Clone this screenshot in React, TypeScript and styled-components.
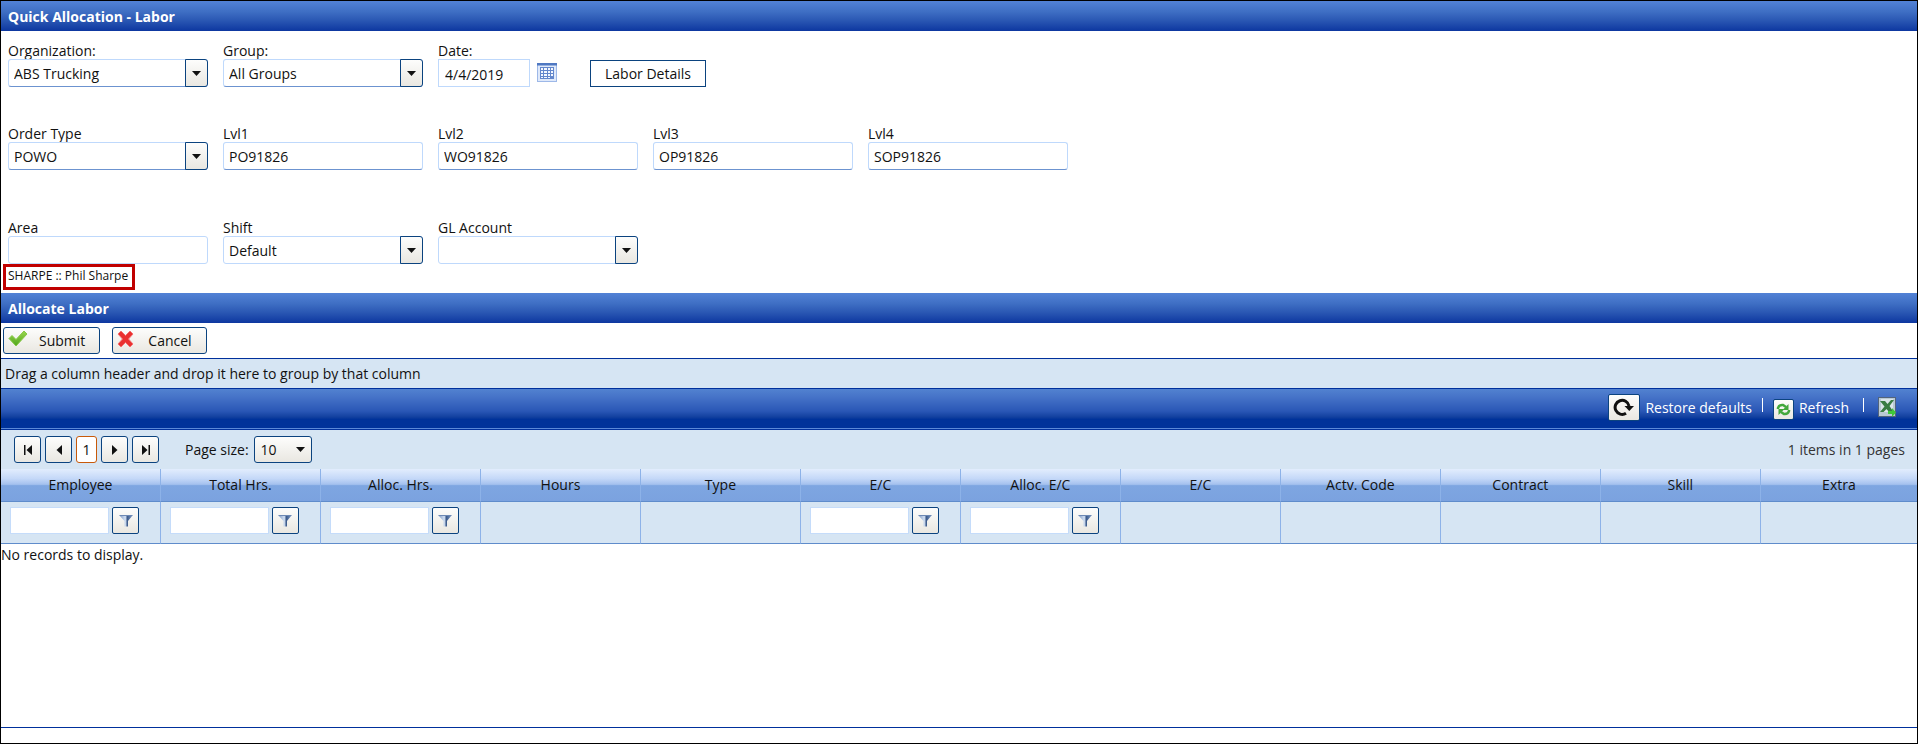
import React, { useId } from "react";
import styled, { createGlobalStyle } from "styled-components";

const GlobalStyle = createGlobalStyle`
  * { box-sizing: border-box; }
  body { margin: 0; background: #fff; }
  body, button, input, select { font-family: "Open Sans", "Noto Sans", sans-serif; font-size: 14px; color: #111; }
`;

const buttonFace = "linear-gradient(#fdfdfc, #e9e7e1)";

const Page = styled.div`
  min-height: 100vh;
  display: flex;
  flex-direction: column;
  border: 1px solid #000;
  background: #fff;
`;

const TitleBar = styled.h2`
  margin: 0;
  height: 30px;
  padding: 0 7px;
  display: flex;
  align-items: center;
  font-size: 14px;
  font-weight: 700;
  color: #fff;
  background: linear-gradient(#5282d6, #3f6fc4 35%, #2a57b3 65%, #0d37a0);
`;

const Form = styled.form`
  padding: 10px 7px 0;
  display: flex;
  flex-direction: column;
`;

const FormRow = styled.div<{ $space?: number }>`
  display: flex;
  align-items: flex-end;
  gap: 15px;
  margin-bottom: ${(p) => p.$space ?? 0}px;
`;

const Field = styled.div<{ $fit?: boolean }>`
  width: ${(p) => (p.$fit ? "auto" : "200px")};
  display: flex;
  flex-direction: column;
`;

const Label = styled.label`
  padding-top: 2px;
  line-height: 16px;
`;

const TextInput = styled.input<{ $light?: boolean }>`
  width: 100%;
  height: 28px;
  padding: 0 5px;
  border: 1px solid #bfd9fc;
  border-bottom-color: ${(p) => (p.$light ? "#bfd9fc" : "#6c93d0")};
  border-radius: 3px;
  background: #fff;
`;

const ComboBox = styled.div`
  display: grid;
  grid-template-columns: 1fr 23px;
`;

const ComboSelect = styled.select<{ $light?: boolean }>`
  grid-area: 1 / 1 / 2 / 3;
  height: 28px;
  padding: 0 28px 0 5px;
  appearance: none;
  border: 1px solid #bfd9fc;
  border-bottom-color: ${(p) => (p.$light ? "#bfd9fc" : "#6c93d0")};
  border-radius: 3px;
  background: #fff;
`;

const ComboArrow = styled.span`
  grid-area: 1 / 2;
  display: flex;
  align-items: center;
  justify-content: center;
  pointer-events: none;
  border: 1px solid #0b437f;
  border-radius: 0 3px 3px 0;
  background: ${buttonFace};
`;

const DateGroup = styled.div`
  display: flex;
  align-items: center;
  gap: 7px;
`;

const DateInput = styled.input`
  width: 92px;
  height: 28px;
  padding: 2px 6px 0;
  border: 1px solid #bfd9fc;
  background: #fff;
`;

const IconButton = styled.button`
  display: flex;
  padding: 0;
  border: 0;
  background: none;
`;

const OutlineButton = styled.button`
  height: 27px;
  margin-left: 18px;
  padding: 0 14px;
  border: 1px solid #0b437f;
  background: #fff;
`;

const EmployeeTag = styled.div`
  align-self: flex-start;
  margin: 0 0 3px -5px;
  height: 26px;
  padding: 0 4px 4px 2px;
  display: flex;
  align-items: center;
  border: 3px solid #c00000;
  font-size: 12px;
`;

const ActionBar = styled.div`
  height: 35px;
  padding: 4px 2px;
  display: flex;
  gap: 12px;
`;

const ActionButton = styled.button`
  height: 27px;
  padding: 0 14px 0 4px;
  display: flex;
  align-items: center;
  gap: 11px;
  border: 1px solid #0b437f;
  border-radius: 3px;
  background: ${buttonFace};

  svg {
    align-self: flex-start;
    margin-top: 2px;
  }
`;

const GroupPanel = styled.div`
  height: 30px;
  padding: 0 4px;
  display: flex;
  align-items: center;
  border-top: 1px solid #00309c;
  background: #d6e5f3;
`;

const CommandBar = styled.div`
  height: 42px;
  padding: 0 21px 4px;
  display: flex;
  align-items: center;
  justify-content: flex-end;
  color: #fff;
  border-top: 1px solid #00309c;
  border-bottom: 1px solid #00309c;
  background: linear-gradient(#5282d0, #4673c8 20%, #2a57b6 55%, #12409f 70%, #00329a 76%, #00329a 97%, #5a88d8 97%);
`;

const Command = styled.button`
  padding: 0;
  display: flex;
  align-items: center;
  gap: 5px;
  border: 0;
  background: none;
  color: #fff;
`;

const CommandIcon = styled.span<{ $small?: boolean }>`
  width: ${(p) => (p.$small ? 21 : 32)}px;
  height: ${(p) => (p.$small ? 21 : 27)}px;
  margin-top: ${(p) => (p.$small ? 4 : 0)}px;
  display: flex;
  align-items: center;
  justify-content: center;
  border: 1px solid #0b437f;
  border-radius: 2px;
  background: ${buttonFace};
`;

const Divider = styled.span<{ $wide?: boolean }>`
  width: 1px;
  height: 14px;
  margin: 0 ${(p) => (p.$wide ? 14 : 10)}px 4px;
  background: #fff;
`;

const Pager = styled.div`
  height: 39px;
  padding: 0 12px 0 13px;
  display: flex;
  align-items: center;
  gap: 4px;
  background: #d6e5f3;
`;

const PagerButton = styled.button<{ $current?: boolean }>`
  width: ${(p) => (p.$current ? 21 : 27)}px;
  height: 27px;
  padding: 0;
  display: flex;
  align-items: center;
  justify-content: center;
  border: 1px solid ${(p) => (p.$current ? "#c85a0a" : "#0b437f")};
  border-radius: 3px;
  background: ${(p) => (p.$current ? "#fff" : buttonFace)};
`;

const PageSizeLabel = styled.label`
  margin-left: 22px;
`;

const PageSize = styled.div`
  width: 58px;
  margin-left: 1px;
  display: grid;
  grid-template-columns: 1fr 16px;
  align-items: center;

  select {
    grid-area: 1 / 1 / 2 / 3;
    height: 27px;
    padding: 0 6px;
    appearance: none;
    border: 1px solid #0b437f;
    border-radius: 3px;
    background: ${buttonFace};
  }

  svg {
    grid-area: 1 / 2;
    pointer-events: none;
  }
`;

const PagerInfo = styled.span`
  margin-left: auto;
  color: #333;
`;

const Grid = styled.table`
  width: 100%;
  table-layout: fixed;
  border-collapse: separate;
  border-spacing: 0;
`;

const HeaderCell = styled.th`
  height: 33px;
  padding: 0 0 2px;
  font-weight: 400;
  text-align: center;
  border-bottom: 1px solid #5f8ccb;
  background: linear-gradient(#e2edfd, #c4d8f8 30%, #a4c1ee 48%, #7ea6e1 52%, #7ba2df);

  &:not(:last-child) {
    width: 8.35%;
    border-right: 1px solid #8db2e8;
  }
`;

const FilterCell = styled.td`
  height: 42px;
  padding: 0 0 5px 9px;
  border-bottom: 1px solid #5f8ccb;
  background: #d6e5f3;

  &:not(:last-child) {
    border-right: 1px solid #8db2e8;
  }
`;

const FilterBox = styled.div`
  display: flex;
  gap: 3px;
`;

const FilterInput = styled.input`
  width: 99px;
  height: 27px;
  padding: 0 5px;
  border: 1px solid #c5dcfa;
  background: #fff;
`;

const FilterButton = styled.button`
  width: 27px;
  height: 27px;
  padding: 0;
  display: flex;
  align-items: center;
  justify-content: center;
  border: 1px solid #0b437f;
  border-radius: 2px;
  background: ${buttonFace};
`;

const EmptyCell = styled.td`
  padding: 1px 0;
  line-height: 20px;
`;

const GridArea = styled.div`
  flex: 1;
  border-bottom: 1px solid #00309c;
`;

const Footer = styled.footer`
  height: 15px;
`;

const DownArrow = () => (
  <svg width="9" height="5" viewBox="0 0 9 5" aria-hidden="true">
    <path d="M0 0h9L4.500 5z" fill="#111" />
  </svg>
);

const CalendarIcon = () => (
  <svg width="20" height="20" viewBox="0 0 20 20" aria-hidden="true">
    <rect x="0.500" y="0.500" width="19" height="18" fill="#dfe9fa" stroke="#9db8e8" />
    <rect x="0" y="0" width="20" height="2.500" fill="#4f78c2" />
    <rect x="3" y="4" width="14" height="12" fill="#6387cc" />
    <path
      fill="#f4f8ff"
      d="M4 5h2v2h-2zM7 5h3v2h-3zM11 5h2v2h-2zM14 5h2v2h-2zM4 8h2v2h-2zM7 8h3v2h-3zM11 8h2v2h-2zM14 8h2v2h-2zM4 11h2v2h-2zM7 11h3v2h-3zM11 11h2v2h-2zM14 11h2v2h-2zM4 14h2v1h-2zM7 14h3v1h-3zM11 14h2v1h-2z"
    />
  </svg>
);

const CheckIcon = () => (
  <svg width="20" height="18" viewBox="0 0 20 18" aria-hidden="true">
    <defs>
      <linearGradient id="check" x1="0" y1="0" x2="0" y2="1">
        <stop offset="0" stopColor="#9ad64e" />
        <stop offset="1" stopColor="#4fa51c" />
      </linearGradient>
    </defs>
    <path d="M1 8.500l3-3 4 4L16 1l3 3L8 16z" fill="url(#check)" stroke="#86c845" strokeLinejoin="round" />
  </svg>
);

const CrossIcon = () => (
  <svg width="20" height="18" viewBox="0 0 20 18" aria-hidden="true">
    <path
      d="M1 4l3-3 4.500 4.500L13 1l3 3-4.500 5 4.500 5-3 3-4.500-4.500L4 17l-3-3 4.500-5z"
      fill="#ea3030"
      stroke="#f27070"
      strokeLinejoin="round"
    />
  </svg>
);

const FunnelIcon = () => (
  <svg width="14" height="13" viewBox="0 0 14 13" aria-hidden="true">
    <defs>
      <linearGradient id="funnel" x1="0" x2="1">
        <stop offset="0" stopColor="#7b98c6" />
        <stop offset="0.450" stopColor="#d3e1f4" />
        <stop offset="0.600" stopColor="#3c5a8a" />
        <stop offset="1" stopColor="#7d9ac8" />
      </linearGradient>
    </defs>
    <path d="M0.500 1.500h13L9 7v5.500H5.500V7z" fill="url(#funnel)" />
    <path d="M0.500 1.500h13" stroke="#6d89b5" />
  </svg>
);

const RestoreIcon = () => (
  <svg width="22" height="20" viewBox="0 0 22 20" aria-hidden="true">
    <path d="M13 16.200A7 7 0 1 1 16 9" fill="none" stroke="#111" strokeWidth="3" />
    <path d="M11.500 9H21l-4.700 5z" fill="#111" />
  </svg>
);

const RefreshIcon = () => (
  <svg width="15" height="15" viewBox="0 0 15 15" aria-hidden="true">
    <g fill="none" stroke="#43a83c" strokeWidth="2.500">
      <path d="M2 7V6q1-3.500 5-3l3 2" />
      <path d="M13 8v1q-1 3.500-5 3l-3-2" />
    </g>
    <path d="M12.500 2v6H6.500zM2.500 13V7h6z" fill="#43a83c" />
  </svg>
);

const ExcelIcon = () => (
  <svg width="18" height="20" viewBox="0 0 18 20" aria-hidden="true">
    <rect x="0.500" y="0.500" width="17" height="19" fill="#b9c9d4" stroke="#52647c" />
    <path d="M3 2h12v13H3z" fill="#dbe6ea" />
    <path d="M2 4h5l2.500 3L13 3h3l-4.500 6 4 6h-4.500l-2.500-3-3 3H2l4.500-5.500z" fill="#3a7d44" />
    <path d="M10 14h4v-3l4 4.500-4 4.500v-3h-4z" fill="#3fc83a" />
  </svg>
);

const FirstIcon = () => (
  <svg width="10" height="10" viewBox="0 0 10 10" aria-hidden="true">
    <path d="M1 0h1.500v10H1zM9 0v10L3.500 5z" fill="#111" />
  </svg>
);

const PrevIcon = () => (
  <svg width="10" height="10" viewBox="0 0 10 10" aria-hidden="true">
    <path d="M8 0v10L2.500 5z" fill="#111" />
  </svg>
);

const NextIcon = () => (
  <svg width="10" height="10" viewBox="0 0 10 10" aria-hidden="true">
    <path d="M2 0v10l5.500-5z" fill="#111" />
  </svg>
);

const LastIcon = () => (
  <svg width="10" height="10" viewBox="0 0 10 10" aria-hidden="true">
    <path d="M7.500 0H9v10H7.500zM1 0v10l5.500-5z" fill="#111" />
  </svg>
);

type FieldProps = { label: string; value: string; light?: boolean };

function TextField({ label, value, light }: FieldProps) {
  const id = useId();
  return (
    <Field>
      <Label htmlFor={id}>{label}</Label>
      <TextInput id={id} defaultValue={value} $light={light} />
    </Field>
  );
}

function ComboField({ label, value, light }: FieldProps) {
  const id = useId();
  return (
    <Field>
      <Label htmlFor={id}>{label}</Label>
      <ComboBox>
        <ComboSelect id={id} defaultValue={value} $light={light}>
          <option value={value}>{value}</option>
        </ComboSelect>
        <ComboArrow>
          <DownArrow />
        </ComboArrow>
      </ComboBox>
    </Field>
  );
}

const columns = [
  { title: "Employee", filter: true },
  { title: "Total Hrs.", filter: true },
  { title: "Alloc. Hrs.", filter: true },
  { title: "Hours" },
  { title: "Type" },
  { title: "E/C", filter: true },
  { title: "Alloc. E/C", filter: true },
  { title: "E/C" },
  { title: "Actv. Code" },
  { title: "Contract" },
  { title: "Skill" },
  { title: "Extra" },
];

export default function App() {
  return (
    <Page>
      <GlobalStyle />
      <TitleBar>Quick Allocation - Labor</TitleBar>
      <Form onSubmit={(e) => e.preventDefault()}>
        <FormRow $space={37}>
          <ComboField label="Organization:" value="ABS Trucking" />
          <ComboField label="Group:" value="All Groups" />
          <Field $fit>
            <Label htmlFor="date">Date:</Label>
            <DateGroup>
              <DateInput id="date" defaultValue="4/4/2019" />
              <IconButton type="button" aria-label="Open calendar">
                <CalendarIcon />
              </IconButton>
            </DateGroup>
          </Field>
          <OutlineButton type="button">Labor Details</OutlineButton>
        </FormRow>
        <FormRow $space={48}>
          <ComboField label="Order Type" value="POWO" />
          <TextField label="Lvl1" value="PO91826" />
          <TextField label="Lvl2" value="WO91826" />
          <TextField label="Lvl3" value="OP91826" />
          <TextField label="Lvl4" value="SOP91826" />
        </FormRow>
        <FormRow>
          <TextField label="Area" value="" light />
          <ComboField label="Shift" value="Default" light />
          <ComboField label="GL Account" value="" light />
        </FormRow>
        <EmployeeTag>SHARPE :: Phil Sharpe</EmployeeTag>
      </Form>

      <TitleBar>Allocate Labor</TitleBar>
      <ActionBar>
        <ActionButton type="button">
          <CheckIcon />
          Submit
        </ActionButton>
        <ActionButton type="button">
          <CrossIcon />
          Cancel
        </ActionButton>
      </ActionBar>
      <GroupPanel>Drag a column header and drop it here to group by that column</GroupPanel>
      <CommandBar>
        <Command type="button">
          <CommandIcon>
            <RestoreIcon />
          </CommandIcon>
          Restore defaults
        </Command>
        <Divider />
        <Command type="button">
          <CommandIcon $small>
            <RefreshIcon />
          </CommandIcon>
          Refresh
        </Command>
        <Divider $wide />
        <IconButton type="button" aria-label="Export to Excel">
          <ExcelIcon />
        </IconButton>
      </CommandBar>
      <Pager>
        <PagerButton type="button" aria-label="First page">
          <FirstIcon />
        </PagerButton>
        <PagerButton type="button" aria-label="Previous page">
          <PrevIcon />
        </PagerButton>
        <PagerButton type="button" $current>
          1
        </PagerButton>
        <PagerButton type="button" aria-label="Next page">
          <NextIcon />
        </PagerButton>
        <PagerButton type="button" aria-label="Last page">
          <LastIcon />
        </PagerButton>
        <PageSizeLabel htmlFor="page-size">Page size:</PageSizeLabel>
        <PageSize>
          <select id="page-size" defaultValue="10">
            <option value="10">10</option>
          </select>
          <DownArrow />
        </PageSize>
        <PagerInfo>1 items in 1 pages</PagerInfo>
      </Pager>
      <GridArea>
        <Grid>
          <thead>
            <tr>
              {columns.map((c, i) => (
                <HeaderCell key={i} scope="col">
                  {c.title}
                </HeaderCell>
              ))}
            </tr>
            <tr>
              {columns.map((c, i) => (
                <FilterCell key={i}>
                  {c.filter && (
                    <FilterBox>
                      <FilterInput aria-label={`Filter ${c.title}`} />
                      <FilterButton type="button" aria-label={`${c.title} filter options`}>
                        <FunnelIcon />
                      </FilterButton>
                    </FilterBox>
                  )}
                </FilterCell>
              ))}
            </tr>
          </thead>
          <tbody>
            <tr>
              <EmptyCell colSpan={columns.length}>No records to display.</EmptyCell>
            </tr>
          </tbody>
        </Grid>
      </GridArea>
      <Footer />
    </Page>
  );
}
